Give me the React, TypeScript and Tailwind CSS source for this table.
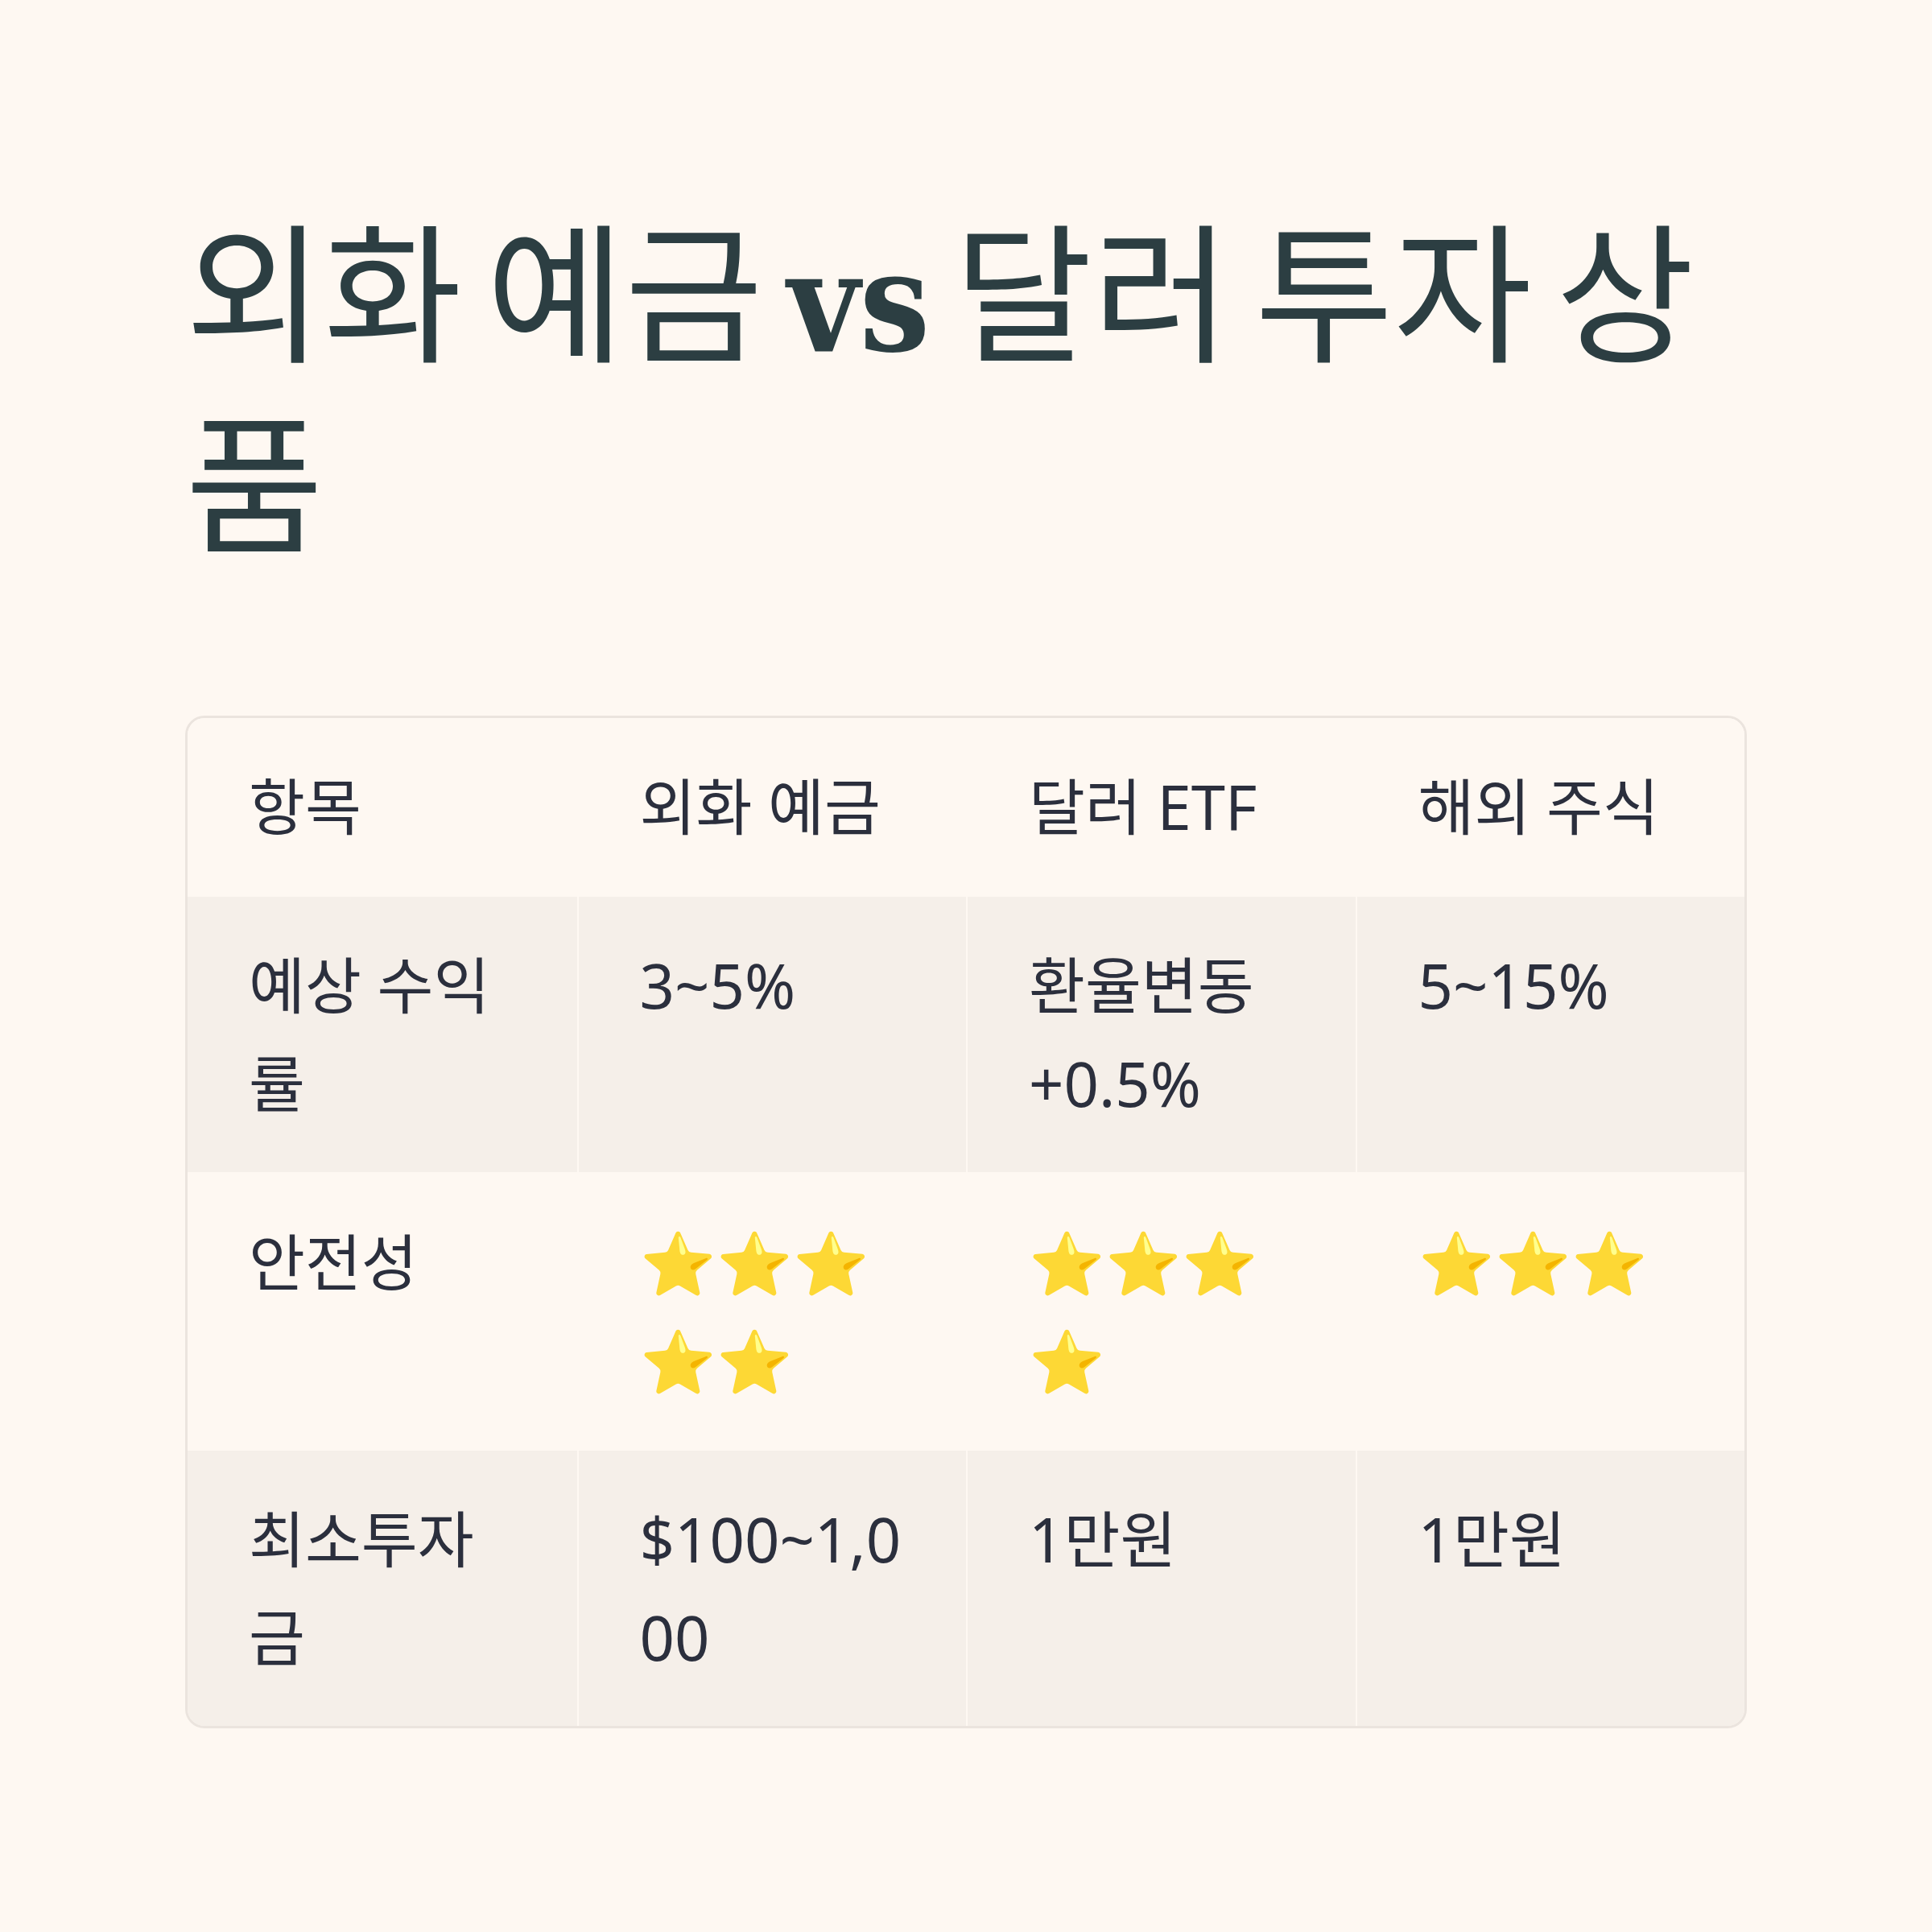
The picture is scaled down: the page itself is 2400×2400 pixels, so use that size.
const rows = [
  { label: '예상 수익률', cells: ['3~5%', '환율변동 +0.5%', '5~15%'], shaded: true },
  { label: '안전성', cells: ['⭐⭐⭐⭐⭐', '⭐⭐⭐⭐', '⭐⭐⭐'], shaded: false },
  { label: '최소투자금', cells: ['$100~1,000', '1만원', '1만원'], shaded: true },
];

const head = ['항목', '외화 예금', '달러 ETF', '해외 주식'];

function Cell({ children, first }: { children: React.ReactNode; first?: boolean }) {
  return (
    <div
      className={`px-[76px] py-[49px] break-words ${first ? '' : 'border-l-2 border-[#fef8f2]'}`}
    >
      {children}
    </div>
  );
}

export default function App() {
  return (
    <div className="w-[2400px] h-[2400px] bg-[#fef8f2] px-[230px] pt-[236px]">
      {/* Title */}
      <h1 className="text-[187px] leading-[237px] font-normal text-[#2c3e42] [word-spacing:-12px] [font-family:'Noto_Sans_CJK_KR',sans-serif]">
        외화 예금{' '}
        <span className="text-[172px] leading-none font-bold [font-family:'DejaVu_Serif_Condensed','DejaVu_Serif',serif]">
          vs
        </span>{' '}
        달러 투자 상품
      </h1>

      {/* Comparison table */}
      <div className="mt-[179px] rounded-3xl border-[3px] border-[#ebe4de] overflow-hidden text-[76px] leading-[122px] text-[#2b2f3d] [font-family:'Noto_Sans','Noto_Sans_CJK_KR',sans-serif]">
        <div className="grid grid-cols-4 bg-[#fef8f2]">
          {head.map((h, i) => (
            <Cell key={h} first={i === 0}>
              {h}
            </Cell>
          ))}
        </div>
        {rows.map((r) => (
          <div
            key={r.label}
            className={`grid grid-cols-4 border-t-2 border-[#fef8f2] ${r.shaded ? 'bg-[#f5efe9]' : 'bg-[#fef8f2]'}`}
          >
            <Cell first>{r.label}</Cell>
            {r.cells.map((c, i) => (
              <Cell key={i}>{c}</Cell>
            ))}
          </div>
        ))}
      </div>
    </div>
  );
}
